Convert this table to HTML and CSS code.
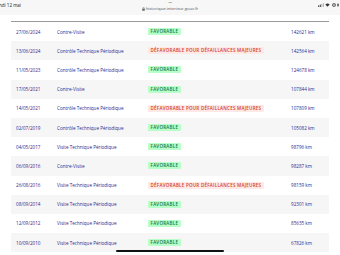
FILE: index.html
```html
<!DOCTYPE html>
<html lang="fr">
<head>
<meta charset="utf-8">
<link rel="stylesheet" href="styles.css">
</head>
<body>
<div class="statusbar">
  <span class="time">ndi 12 mai</span>
  <div class="center">
    <span class="dots">•••</span>
    <span class="url"><svg class="lock" viewBox="0 0 4 5" width="3" height="4"><rect x="0.3" y="2" width="3.4" height="2.8" fill="#666"/><path d="M1 2V1.3a1 1 0 0 1 2 0V2" fill="none" stroke="#666" stroke-width="0.6"/></svg>historique.interieur.gouv.fr</span>
  </div>
  <div class="icons">
    <svg viewBox="0 0 7 5" width="6" height="4"><rect x="0" y="3" width="1.2" height="2" fill="#333"/><rect x="2" y="2" width="1.2" height="3" fill="#333"/><rect x="4" y="1" width="1.2" height="4" fill="#aaa"/><rect x="6" y="0" width="1" height="5" fill="#aaa"/></svg>
    <svg viewBox="0 0 6 5" width="5" height="4"><path d="M0.3 1.8a4 4 0 0 1 5.4 0L3 4.8z" fill="#333"/></svg>
    <svg viewBox="0 0 5 5" width="4" height="4"><circle cx="2.5" cy="2.5" r="2" fill="none" stroke="#333" stroke-width="0.8"/><circle cx="2.5" cy="2.5" r="0.8" fill="#333"/></svg>
    <svg viewBox="0 0 3 5" width="2" height="4"><rect x="0.5" y="0.5" width="2" height="4" fill="#333"/></svg>
  </div>
</div>
<div class="table">
  <div class="row"><span class="date">27/06/2024</span><span class="type">Contre-Visite</span><span><span class="badge ok">Favorable</span></span><span class="km">142621 km</span></div>
  <div class="row alt"><span class="date">13/06/2024</span><span class="type">Contrôle Technique Périodique</span><span><span class="badge ko">Défavorable pour défaillances majeures</span></span><span class="km">142564 km</span></div>
  <div class="row"><span class="date">11/05/2023</span><span class="type">Contrôle Technique Périodique</span><span><span class="badge ok">Favorable</span></span><span class="km">124678 km</span></div>
  <div class="row alt"><span class="date">17/05/2021</span><span class="type">Contre-Visite</span><span><span class="badge ok">Favorable</span></span><span class="km">107844 km</span></div>
  <div class="row"><span class="date">14/05/2021</span><span class="type">Contrôle Technique Périodique</span><span><span class="badge ko">Défavorable pour défaillances majeures</span></span><span class="km">107809 km</span></div>
  <div class="row alt"><span class="date">02/07/2019</span><span class="type">Contrôle Technique Périodique</span><span><span class="badge ok">Favorable</span></span><span class="km">105082 km</span></div>
  <div class="row"><span class="date">04/05/2017</span><span class="type">Visite Technique Périodique</span><span><span class="badge ok">Favorable</span></span><span class="km">98796 km</span></div>
  <div class="row alt"><span class="date">06/09/2016</span><span class="type">Contre-Visite</span><span><span class="badge ok">Favorable</span></span><span class="km">98287 km</span></div>
  <div class="row"><span class="date">26/08/2016</span><span class="type">Visite Technique Périodique</span><span><span class="badge ko">Défavorable pour défaillances majeures</span></span><span class="km">98159 km</span></div>
  <div class="row alt"><span class="date">08/09/2014</span><span class="type">Visite Technique Périodique</span><span><span class="badge ok">Favorable</span></span><span class="km">92301 km</span></div>
  <div class="row"><span class="date">12/09/2012</span><span class="type">Visite Technique Périodique</span><span><span class="badge ok">Favorable</span></span><span class="km">85635 km</span></div>
  <div class="row alt"><span class="date">10/09/2010</span><span class="type">Visite Technique Périodique</span><span><span class="badge ok">Favorable</span></span><span class="km">67826 km</span></div>
</div>
<div class="home"></div>
</body>
</html>
```
FILE: styles.css
```css
html, body {
  margin: 0;
  padding: 0;
}
body {
  width: 340px;
  height: 255px;
  overflow: hidden;
  background: #fff;
  font-family: "Open Sans", "Liberation Sans", sans-serif;
  position: relative;
}
.statusbar {
  height: 15px;
  background: #f7f7f8;
  display: flex;
  justify-content: space-between;
  align-items: flex-start;
  position: relative;
}
.time {
  font-size: 4.5px;
  color: #222;
  padding-top: 2px;
  margin-left: -1px;
}
.center {
  position: absolute;
  left: 0;
  right: 0;
  top: 0;
  display: flex;
  flex-direction: column;
  align-items: center;
}
.dots {
  font-size: 4px;
  color: #888;
  line-height: 6px;
  letter-spacing: -0.3px;
}
.url {
  font-size: 4.2px;
  color: #555;
  display: flex;
  align-items: center;
  gap: 1px;
  line-height: 6px;
}
.icons {
  display: flex;
  gap: 1.5px;
  align-items: center;
  padding-top: 3px;
  padding-right: 1px;
}
.table {
  margin: 6px 11px 0;
  border-top: 1px solid #9a9a9a;
}
.row {
  display: grid;
  grid-template-columns: 41px 91px 143px 1fr;
  align-items: center;
  height: 19.2px;
  padding-left: 5px;
  font-size: 4.6px;
  color: #2a2a8e;
}
.row.alt {
  background: #f6f6f6;
}
.badge {
  display: inline-block;
  text-transform: uppercase;
  font-weight: 600;
  font-size: 4.5px;
  letter-spacing: 0.25px;
  line-height: 7px;
  padding: 0 2.5px;
  border-radius: 1px;
}
.badge.ok {
  background: #b8fec9;
  color: #18753c;
}
.badge.ko {
  background: #ffe9e6;
  color: #d0401f;
}
.home {
  position: absolute;
  left: 116px;
  top: 250px;
  width: 108px;
  height: 1.5px;
  background: #111;
  border-radius: 1px;
}
```
